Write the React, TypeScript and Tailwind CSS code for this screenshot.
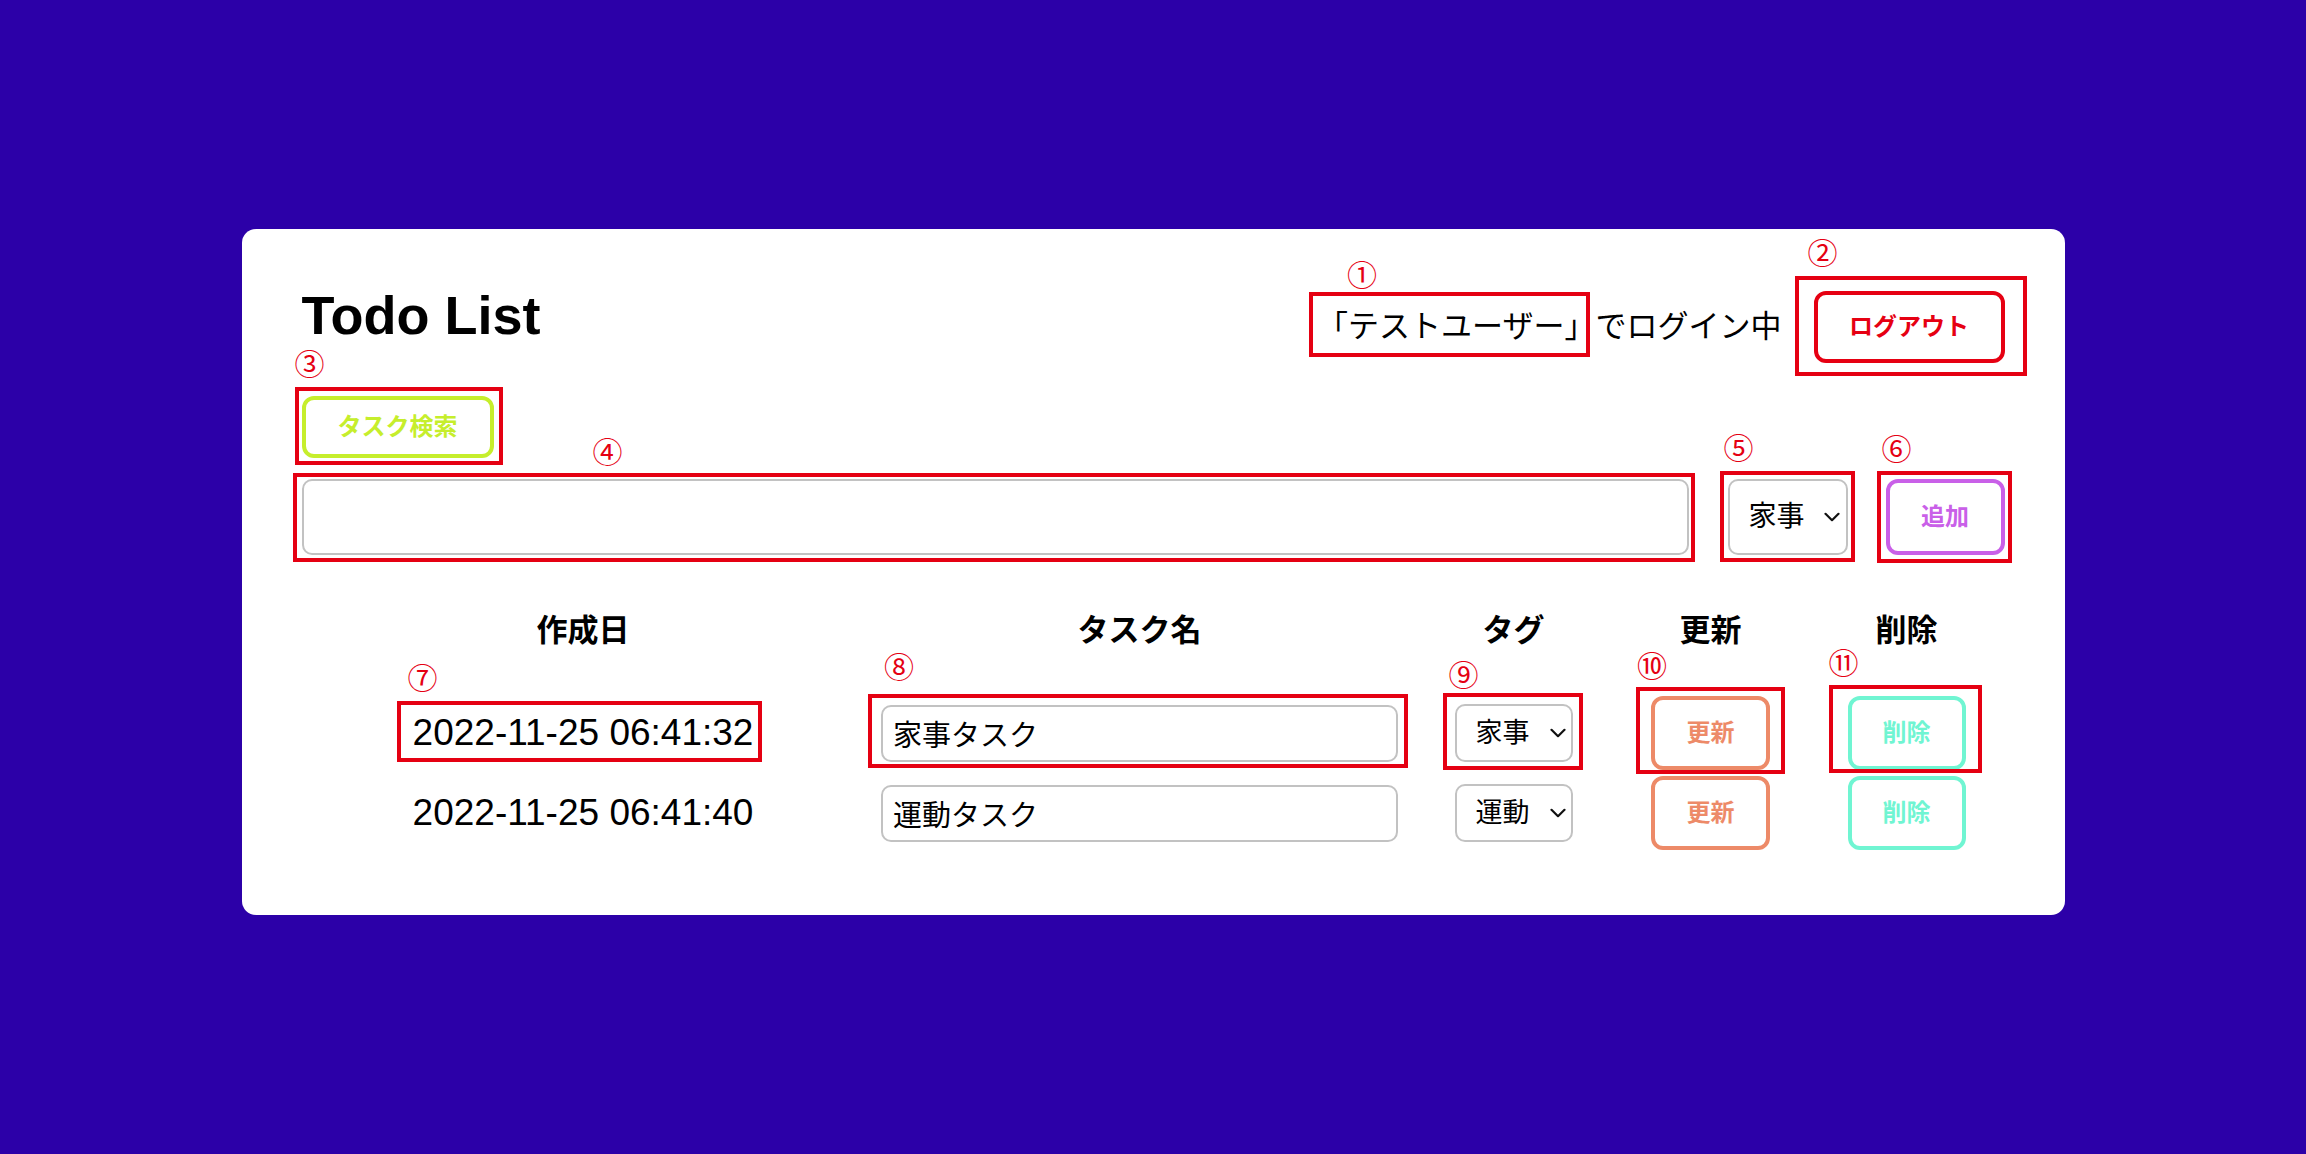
import React from "react";

function Chevron({ className }: { className: string }) {
  return (
    <svg
      className={className}
      width="16"
      height="10"
      viewBox="0 0 16 10"
      fill="none"
      stroke="#111"
      strokeWidth="2.2"
      strokeLinecap="round"
      strokeLinejoin="round"
    >
      <path d="M1.5 1.8 L8 8.2 L14.5 1.8" />
    </svg>
  );
}

const RED = "border-[#e50012]";
const NUM = "absolute -translate-x-1/2 -translate-y-1/2 text-[30px] leading-none text-[#e50012]";

export default function App() {
  return (
    <div className="flex h-[1154px] w-full items-start justify-center bg-[#2c00a8] pt-[229px] font-[family-name:'Liberation_Sans','Noto_Sans_CJK_JP',sans-serif] text-black">
      <div className="h-[686px] w-[1823px] rounded-[14px] bg-white px-[60px] pt-[62px]">
        {/* header */}
        <div className="flex items-start justify-between">
          <h1 className="mt-[-2px] text-[54px] font-bold leading-[52px]">Todo List</h1>
          <div className="flex items-center gap-[32px]">
            <p className="text-[31px] leading-[40px]">
              <span className="relative inline-block">
                「テストユーザー」
                <span className={`pointer-events-none absolute -left-[8px] -top-[15px] right-[6px] -bottom-[10px] border-4 ${RED}`} />
                <span className={`${NUM} left-[45px] top-[-31px]`}>①</span>
              </span>
              でログイン中
            </p>
            <div className="relative">
              <button className="h-[72px] w-[191px] rounded-[12px] border-4 border-[#e60012] bg-white text-[24px] font-bold text-[#e60012]">
                ログアウト
              </button>
              <span className={`pointer-events-none absolute -left-[19px] -top-[15px] -right-[22px] -bottom-[13px] border-4 ${RED}`} />
              <span className={`${NUM} left-[9px] top-[-37px]`}>②</span>
            </div>
          </div>
        </div>

        {/* search */}
        <div className="mt-[33px] flex">
          <div className="relative">
            <button className="h-[62px] w-[192px] rounded-[12px] border-4 border-[#c6ee2c] bg-white text-[24px] font-bold text-[#c6ee2c]">
              タスク検索
            </button>
            <span className={`pointer-events-none absolute -left-[7px] -top-[9px] -right-[9px] -bottom-[7px] border-4 ${RED}`} />
            <span className={`${NUM} left-[8px] top-[-31px]`}>③</span>
          </div>
        </div>

        {/* add row */}
        <div className="mt-[21px] flex h-[76px] items-center gap-[39px]">
          <div className="relative h-[76px] flex-1">
            <input
              type="text"
              className="h-full w-full rounded-[10px] border-2 border-[#c2c2c2] bg-white px-[12px] text-[29px] outline-none"
            />
            <span className={`pointer-events-none absolute -left-[9px] -top-[6px] -right-[6px] -bottom-[7px] border-4 ${RED}`} />
            <span className={`${NUM} left-[306px] top-[-26px]`}>④</span>
          </div>
          <div className="flex items-center gap-[38px]">
            <div className="relative h-[76px] w-[120px]">
              <select
                defaultValue="家事"
                className="h-full w-full appearance-none rounded-[10px] border-2 border-[#c2c2c2] bg-white pl-[19px] text-[28px] outline-none"
              >
                <option>家事</option>
                <option>運動</option>
                <option>勉強</option>
              </select>
              <Chevron className="pointer-events-none absolute right-[8px] top-1/2 -translate-y-1/2" />
              <span className={`pointer-events-none absolute -left-[8px] -top-[8px] -right-[7px] -bottom-[7px] border-4 ${RED}`} />
              <span className={`${NUM} left-[11px] top-[-30px]`}>⑤</span>
            </div>
            <div className="relative">
              <button className="h-[76px] w-[119px] rounded-[12px] border-4 border-[#c960e8] bg-white text-[24px] font-bold text-[#c960e8]">
                追加
              </button>
              <span className={`pointer-events-none absolute -left-[9px] -top-[8px] -right-[7px] -bottom-[8px] border-4 ${RED}`} />
              <span className={`${NUM} left-[11px] top-[-29px]`}>⑥</span>
            </div>
          </div>
        </div>

        {/* table header */}
        <div className="mt-[56px] grid h-[40px] grid-cols-[563px_550px_198px_196px_196px] items-center justify-items-center text-[31px] font-bold leading-[40px]">
          <div>作成日</div>
          <div>タスク名</div>
          <div>タグ</div>
          <div>更新</div>
          <div>削除</div>
        </div>

        {/* row 1 */}
        <div className="mt-[42px] grid h-[80px] grid-cols-[563px_550px_198px_196px_196px] items-center justify-items-center">
          <span className="relative inline-block text-[37px] leading-[40px]">
            2022-11-25 06:41:32
            <span className={`pointer-events-none absolute -left-[16px] -top-[12px] -right-[9px] -bottom-[9px] border-4 ${RED}`} />
            <span className={`${NUM} left-[10px] top-[-34px]`}>⑦</span>
          </span>
          <div className="relative">
            <input
              type="text"
              defaultValue="家事タスク"
              className="h-[57px] w-[517px] rounded-[10px] border-2 border-[#c2c2c2] bg-white px-[10px] text-[29px] outline-none"
            />
            <span className={`pointer-events-none absolute -left-[13px] -top-[11px] -right-[10px] -bottom-[6px] border-4 ${RED}`} />
            <span className={`${NUM} left-[18px] top-[-37px]`}>⑧</span>
          </div>
          <div className="relative h-[58px] w-[118px]">
            <select
              defaultValue="家事"
              className="h-full w-full appearance-none rounded-[10px] border-2 border-[#c2c2c2] bg-white pl-[19px] text-[27px] outline-none"
            >
              <option>家事</option>
              <option>運動</option>
              <option>勉強</option>
            </select>
            <Chevron className="pointer-events-none absolute right-[7px] top-1/2 -translate-y-1/2" />
            <span className={`pointer-events-none absolute -left-[12px] -top-[11px] -right-[10px] -bottom-[8px] border-4 ${RED}`} />
            <span className={`${NUM} left-[9px] top-[-28px]`}>⑨</span>
          </div>
          <div className="relative">
            <button className="h-[74px] w-[119px] rounded-[12px] border-4 border-[#ed8a68] bg-white text-[24px] font-bold text-[#ed8a68]">
              更新
            </button>
            <span className={`pointer-events-none absolute -left-[15px] -top-[9px] -right-[15px] -bottom-[4px] border-4 ${RED}`} />
            <span className={`${NUM} left-[1px] top-[-29px]`}>⑩</span>
          </div>
          <div className="relative">
            <button className="h-[74px] w-[118px] rounded-[12px] border-4 border-[#70f5d2] bg-white text-[24px] font-bold text-[#70f5d2]">
              削除
            </button>
            <span className={`pointer-events-none absolute -left-[19px] -top-[11px] -right-[16px] -bottom-[3px] border-4 ${RED}`} />
            <span className={`${NUM} left-[-4px] top-[-32px]`}>⑪</span>
          </div>
        </div>

        {/* row 2 */}
        <div className="grid h-[80px] grid-cols-[563px_550px_198px_196px_196px] items-center justify-items-center">
          <span className="inline-block text-[37px] leading-[40px]">2022-11-25 06:41:40</span>
          <input
            type="text"
            defaultValue="運動タスク"
            className="h-[57px] w-[517px] rounded-[10px] border-2 border-[#c2c2c2] bg-white px-[10px] text-[29px] outline-none"
          />
          <div className="relative h-[58px] w-[118px]">
            <select
              defaultValue="運動"
              className="h-full w-full appearance-none rounded-[10px] border-2 border-[#c2c2c2] bg-white pl-[19px] text-[27px] outline-none"
            >
              <option>家事</option>
              <option>運動</option>
              <option>勉強</option>
            </select>
            <Chevron className="pointer-events-none absolute right-[7px] top-1/2 -translate-y-1/2" />
          </div>
          <button className="h-[74px] w-[119px] rounded-[12px] border-4 border-[#ed8a68] bg-white text-[24px] font-bold text-[#ed8a68]">
            更新
          </button>
          <button className="h-[74px] w-[118px] rounded-[12px] border-4 border-[#70f5d2] bg-white text-[24px] font-bold text-[#70f5d2]">
            削除
          </button>
        </div>
      </div>
    </div>
  );
}
